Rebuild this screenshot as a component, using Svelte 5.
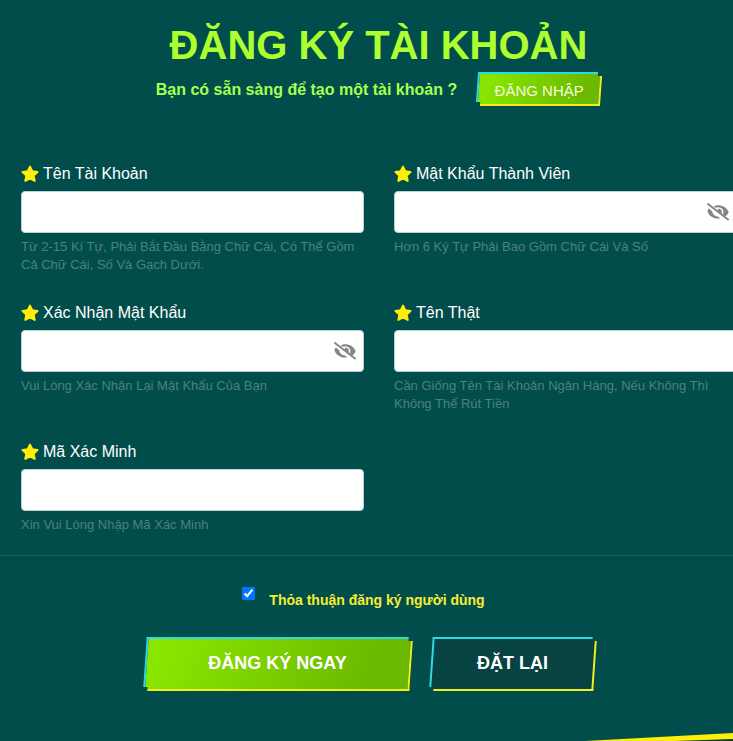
<script lang="ts">
  let fields = [
    { id: 'account', label: 'Tên Tài Khoản', hint: 'Từ 2-15 Kí Tự, Phải Bắt Đầu Bằng Chữ Cái, Có Thể Gồm Cả Chữ Cái, Số Và Gạch Dưới.', secret: false },
    { id: 'password', label: 'Mật Khẩu Thành Viên', hint: 'Hơn 6 Ký Tự Phải Bao Gồm Chữ Cái Và Số', secret: true },
    { id: 'confirm', label: 'Xác Nhận Mật Khẩu', hint: 'Vui Lòng Xác Nhận Lại Mật Khẩu Của Bạn', secret: true },
    { id: 'realname', label: 'Tên Thật', hint: 'Cần Giống Tên Tài Khoản Ngân Hàng, Nếu Không Thì Không Thể Rút Tiền', secret: false },
    { id: 'captcha', label: 'Mã Xác Minh', hint: 'Xin Vui Lòng Nhập Mã Xác Minh', secret: false }
  ]

  let values: Record<string, string> = {}
  let visible: Record<string, boolean> = {}
  let agreed = true

  function reset() {
    values = {}
    visible = {}
  }
</script>

<main class="page">
  <form class="register" on:submit|preventDefault>
    <header class="heading">
      <h1>ĐĂNG KÝ TÀI KHOẢN</h1>
      <div class="login">
        <p>Bạn có sẵn sàng để tạo một tài khoản ?</p>
        <button type="button" class="btn small green"><span>ĐĂNG NHẬP</span></button>
      </div>
    </header>

    <div class="fields">
      {#each fields as field (field.id)}
        <div class="field">
          <label for={field.id}>
            <svg class="star" viewBox="0 0 18 18" aria-hidden="true">
              <path d="M9 1.6 11.3 6.3 16.5 7 12.7 10.6 13.7 15.9 9 13.4 4.3 15.9 5.3 10.6 1.5 7 6.7 6.3Z" />
            </svg>
            {field.label}
          </label>
          <div class="control">
            <input
              id={field.id}
              type={field.secret && !visible[field.id] ? 'password' : 'text'}
              value={values[field.id] ?? ''}
              on:input={(e) => (values[field.id] = e.currentTarget.value)}
            />
            {#if field.secret}
              <button type="button" class="eye" aria-label="Hiện mật khẩu" on:click={() => (visible[field.id] = !visible[field.id])}>
                <svg viewBox="0 0 24 20" aria-hidden="true">
                  <path class="lid" d="M3 6.600C1.800 7.600 1.300 8.700 1.700 9.900 3.400 14 7.400 16.500 12 16.500c.8 0 1.500 0 2.200-.2l-2.300-1.800C8.800 14.300 6.400 12.200 6.200 9.300Z" />
                  <path class="lid" d="M8 4.200C9.300 3.500 10.600 3.200 12 3.200c4.700 0 8.500 2.300 10.300 6 .3.6.3 1.200 0 1.800-.7 1.400-1.700 2.500-2.900 3.400l-2.500-2c1.600-3.500-.6-7.200-4.900-7.200-1.100 0-2 .2-2.800.6Z" />
                  <path class="lid" d="M11.800 6.900c.5 1 0 1.600-.6 2l4.200 3.100c1.500-3.100-.8-5.500-3.600-5.100Z" />
                  <path class="slash" d="M2 2 22 17.500" />
                </svg>
              </button>
            {/if}
          </div>
          <p class="hint">{field.hint}</p>
        </div>
      {/each}
    </div>

    <div class="agree">
      <input id="agree" type="checkbox" bind:checked={agreed} />
      <label for="agree">Thỏa thuận đăng ký người dùng</label>
    </div>

    <div class="actions">
      <button type="submit" class="btn wide green"><span>ĐĂNG KÝ NGAY</span></button>
      <button type="button" class="btn dark" on:click={reset}><span>ĐẶT LẠI</span></button>
    </div>
  </form>

  <svg class="stripe" viewBox="0 0 733 8" preserveAspectRatio="none" aria-hidden="true">
    <path fill="#073b36" d="M640 8 733 5V8Z" />
    <path fill="#ffee0a" d="M585 8 733 0V6L675 8Z" />
  </svg>
</main>

<style>
  :global(body) {
    background: #014d4c;
    overflow-x: hidden;
  }

  .page {
    overflow: hidden;
    font-family: Arial, "Liberation Sans", sans-serif;
    color: #fff;
  }

  /* the form runs a little past the right edge of the window */
  .register {
    width: calc(100% + 24px);
  }

  .heading {
    display: flex;
    flex-direction: column;
    align-items: center;
    padding-top: 20px;
  }

  h1 {
    margin: 0;
    font-size: 40px;
    line-height: 50px;
    color: #adff2f;
  }

  .login {
    display: flex;
    align-items: center;
    gap: 20px;
    margin-top: 2px;
  }

  .login p {
    margin: 0;
    padding-top: 2px;
    font-size: 16px;
    font-weight: bold;
    color: #a8ff50;
  }

  .fields {
    display: grid;
    grid-template-columns: 1fr 1fr;
    gap: 26px 30px;
    margin-top: 55px;
    padding: 0 20px 3px 21px;
    border-bottom: 1px solid #1b625f;
  }

  .field label {
    display: flex;
    align-items: center;
    gap: 4px;
    font-size: 16px;
    line-height: 26px;
  }

  .star {
    width: 18px;
    height: 18px;
    fill: #ffee0a;
    stroke: #ffee0a;
    stroke-width: 2;
    stroke-linejoin: round;
  }

  .control {
    position: relative;
    margin-top: 4px;
  }

  .control input {
    display: block;
    box-sizing: border-box;
    width: 100%;
    height: 42px;
    padding: 6px 12px;
    border: 1px solid #b9d3d2;
    border-radius: 4px;
    background: #fff;
    font-size: 16px;
  }

  .eye {
    position: absolute;
    top: 11px;
    right: 7px;
    width: 24px;
    height: 20px;
    padding: 0;
    border: 0;
    background: none;
    cursor: pointer;
  }

  .eye svg {
    display: block;
  }

  .lid {
    fill: #858585;
  }

  .slash {
    fill: none;
    stroke: #858585;
    stroke-width: 2;
    stroke-linecap: round;
  }

  .hint {
    min-height: 36px;
    margin: 5px 0 0;
    font-size: 13px;
    line-height: 18px;
    color: #4a8280;
  }

  .agree {
    display: flex;
    justify-content: center;
    gap: 14px;
    margin-top: 31px;
    padding-right: 30px;
  }

  .agree input {
    width: 13px;
    height: 13px;
    margin: 0;
  }

  .agree label {
    padding-top: 3px;
    font-size: 14px;
    font-weight: bold;
    line-height: 20px;
    color: #f5ee32;
  }

  .actions {
    display: flex;
    justify-content: center;
    gap: 20px;
    margin-top: 27px;
    padding-right: 18px;
  }

  .btn {
    position: relative;
    width: 164px;
    height: 54px;
    padding: 0 0 2px;
    border: 0;
    background: none;
    font-family: inherit;
    font-size: 18px;
    font-weight: bold;
    color: #fff;
    cursor: pointer;
  }

  .btn.wide {
    width: 266px;
  }

  .btn.small {
    width: 124px;
    height: 34px;
    padding: 2px 0 0;
    font-size: 15px;
    font-weight: normal;
    color: #f3ffd8;
  }

  .btn span {
    position: relative;
    z-index: 1;
  }

  /* slanted plates: cyan on the top left, yellow on the bottom right */
  .btn::before,
  .btn::after {
    content: '';
    position: absolute;
    box-sizing: border-box;
    transform: skewX(-4deg);
  }

  .btn::before {
    inset: 0 4px 4px 0;
    border: 0 solid #2fd9e3;
    border-width: 2px 0 0 2px;
  }

  .btn::after {
    inset: 4px 0 0 4px;
    border: 0 solid #f2ee1c;
    border-width: 0 2px 2px 0;
  }

  .green::before,
  .green::after {
    background: linear-gradient(110deg, #8ae600 5%, #6bb800 85%) border-box;
  }

  .dark::before,
  .dark::after {
    background: #084343;
  }

  .stripe {
    display: block;
    width: 100%;
    height: 8px;
    margin-top: 42px;
  }
</style>
